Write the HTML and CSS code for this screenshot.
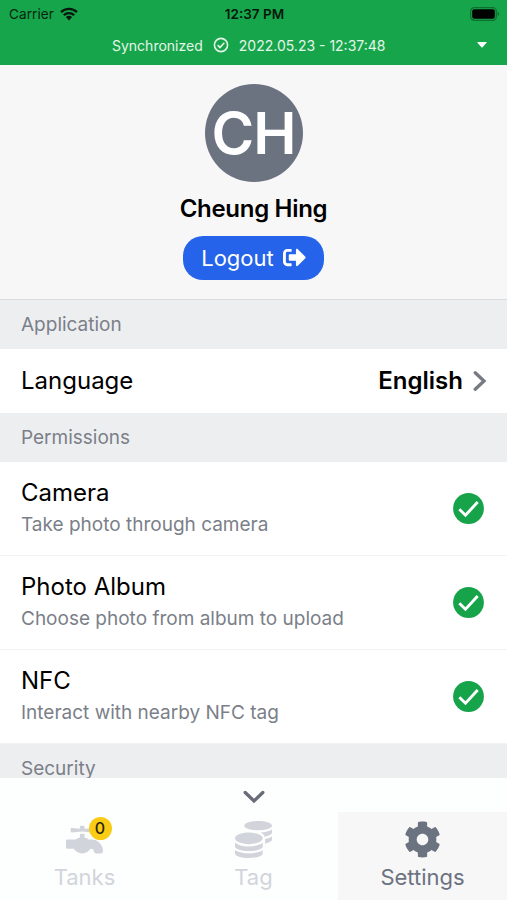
FILE: index.html
```html
<!DOCTYPE html>
<html lang="en">
<head>
<meta charset="utf-8">
<title>Settings</title>
<link rel="stylesheet" href="styles.css">
</head>
<body>
<div class="screen">
  <header class="header">
    <div class="status">
      <div class="carrier"><span>Carrier</span>
        <svg width="18" height="14" viewBox="0 0 18 14"><g fill="none" stroke="#06180c" stroke-width="2.3"><path d="M1 5.1a11.4 11.4 0 0 1 16 0"/><path d="M3.8 8.2a7.4 7.4 0 0 1 10.4 0"/></g><path fill="#06180c" d="M5.9 10.1a4.4 4.4 0 0 1 6.2 0L9 13.4z"/></svg>
      </div>
      <span class="clock">12:37 PM</span>
      <svg class="battery" width="30" height="14" viewBox="0 0 30 14"><rect x=".7" y=".7" width="25.6" height="12.6" rx="3.6" fill="none" stroke="#0d7030" stroke-width="1.3"/><rect x="2.2" y="2.2" width="22.6" height="9.6" rx="2" fill="#000"/><path d="M27.6 5v4q1.7-.7 1.7-2t-1.7-2z" fill="#0d7030"/></svg>
    </div>
    <div class="sync">
      <span class="sync-state">Synchronized</span>
      <svg width="16" height="16" viewBox="0 0 16 16" fill="none" stroke="#e4f5e9" stroke-width="1.6"><circle cx="8" cy="8" r="6.6"/><path d="M4.7 8.1l2.3 2.4 4.3-4.7"/></svg>
      <span class="sync-time">2022.05.23 - 12:37:48</span>
      <svg class="caret" width="10" height="6" viewBox="0 0 10 6"><path d="M.8 0h8.4q.8 0 .3.7L5.6 5.2q-.6.6-1.2 0L.5.7Q0 0 .8 0z" fill="#fff"/></svg>
    </div>
  </header>

  <section class="profile">
    <div class="avatar"><span>CH</span></div>
    <h1 class="name">Cheung Hing</h1>
    <button class="logout"><span>Logout</span>
      <svg width="23" height="23" viewBox="0 0 512 512" fill="#fff"><path d="M497 273L329 441c-15 15-41 4.500-41-17v-96H152c-13.300 0-24-10.700-24-24v-96c0-13.300 10.700-24 24-24h136V88c0-21.400 25.900-32 41-17l168 168c9.300 9.400 9.300 24.600 0 34zM192 436v-40c0-6.600-5.400-12-12-12H96c-17.700 0-32-14.300-32-32V160c0-17.700 14.300-32 32-32h84c6.600 0 12-5.400 12-12V76c0-6.600-5.400-12-12-12H96c-53 0-96 43-96 96v192c0 53 43 96 96 96h84c6.600 0 12-5.400 12-12z"/></svg>
    </button>
  </section>

  <main class="list">
    <h2 class="section">Application</h2>
    <div class="row row-language">
      <span class="title t-language">Language</span>
      <span class="value">English</span>
      <svg width="14" height="22" viewBox="0 0 14 22"><path d="M2.200 2.800L11 11l-8.800 8.200" fill="none" stroke="#777983" stroke-width="3.300" stroke-linecap="round"/></svg>
    </div>
    <h2 class="section section-permissions">Permissions</h2>
    <div class="row">
      <div class="text"><span class="title t-camera">Camera</span><span class="sub s-camera">Take photo through camera</span></div>
      <svg class="check" viewBox="0 0 31 31"><circle cx="15.500" cy="15.500" r="15.400" fill="#16a34a"/><path d="M6.300 16.200l6.200 6L24.700 9.100" fill="none" stroke="#fff" stroke-width="2.900"/></svg>
    </div>
    <div class="row">
      <div class="text"><span class="title t-photo">Photo Album</span><span class="sub s-photo">Choose photo from album to upload</span></div>
      <svg class="check" viewBox="0 0 31 31"><circle cx="15.500" cy="15.500" r="15.400" fill="#16a34a"/><path d="M6.300 16.200l6.200 6L24.700 9.100" fill="none" stroke="#fff" stroke-width="2.900"/></svg>
    </div>
    <div class="row">
      <div class="text"><span class="title t-nfc">NFC</span><span class="sub s-nfc">Interact with nearby NFC tag</span></div>
      <svg class="check" viewBox="0 0 31 31"><circle cx="15.500" cy="15.500" r="15.400" fill="#16a34a"/><path d="M6.300 16.200l6.200 6L24.700 9.100" fill="none" stroke="#fff" stroke-width="2.900"/></svg>
    </div>
    <h2 class="section section-security">Security</h2>
  </main>

  <footer class="footer">
    <div class="more"><svg width="22" height="14" viewBox="0 0 22 14"><path d="M2.200 2.500L11 11l8.800-8.500" fill="none" stroke="#686b78" stroke-width="3.300" stroke-linecap="round"/></svg></div>
    <nav class="tabs">
      <a class="tab">
        <span class="icon"><svg viewBox="0 0 512 512"><path d="M352 256H313.390c-15.710-13.440-35.460-23.070-57.390-28V180.440l-32-3.380-32 3.380V228c-21.930 5-41.680 14.600-57.390 28H16A16 16 0 0 0 0 272v96a16 16 0 0 0 16 16h92.790C129.380 421.730 173 448 224 448s94.620-26.270 115.210-64H352a32 32 0 0 1 32 32 32 32 0 0 0 32 32h64a32 32 0 0 0 32-32A160 160 0 0 0 352 256ZM81.590 159.910l142.410-15 142.410 15c9.420 1 17.590-6.810 17.590-16.800V112.890c0-10-8.170-17.800-17.590-16.810L256 107.740V80a16 16 0 0 0-16-16H208a16 16 0 0 0-16 16v27.740L81.590 96.080C72.170 95.090 64 102.900 64 112.890v30.220c0 9.990 8.170 17.800 17.590 16.800Z"/></svg><b class="badge">0</b></span>
        <span class="label l-tanks">Tanks</span>
      </a>
      <a class="tab">
        <span class="icon"><svg viewBox="0 0 512 512"><path d="M0 405.300V448c0 35.300 86 64 192 64s192-28.700 192-64v-42.700C342.700 434.400 267.200 448 192 448S41.300 434.400 0 405.300zM320 128c106 0 192-28.700 192-64S426 0 320 0 128 28.700 128 64s86 64 192 64zM0 300.400V352c0 35.300 86 64 192 64s192-28.700 192-64v-51.600c-41.300 34-116.900 51.600-192 51.600S41.300 334.400 0 300.400zm416 11c57.300-11.100 96-31.700 96-55.400v-42.700c-23.200 16.400-57.300 27.600-96 34.500v63.600zM192 160C86 160 0 195.800 0 240s86 80 192 80 192-35.800 192-80-86-80-192-80zm219.300 56.300c60-10.800 100.700-32 100.700-56.300v-42.700c-35.500 25.100-96.500 38.600-160.700 41.800 29.500 14.300 51.200 33.500 60 57.200z"/></svg></span>
        <span class="label l-tag">Tag</span>
      </a>
      <a class="tab active">
        <span class="icon"><svg viewBox="0 0 512 512"><path d="M487.400 315.700l-42.600-24.600c4.300-23.200 4.300-47 0-70.200l42.600-24.600c4.900-2.800 7.100-8.600 5.500-14-11.100-35.600-30-67.800-54.700-94.600-3.800-4.100-10-5.100-14.800-2.300L380.800 110c-17.900-15.400-38.500-27.300-60.800-35.100V25.800c0-5.600-3.900-10.500-9.400-11.700-36.700-8.200-74.300-7.800-109.200 0-5.500 1.200-9.400 6.100-9.400 11.700V75c-22.200 7.900-42.800 19.800-60.800 35.100L88.700 85.500c-4.900-2.800-11-1.900-14.800 2.300-24.700 26.700-43.600 58.900-54.700 94.600-1.700 5.400.6 11.200 5.500 14L67.300 221c-4.300 23.200-4.300 47 0 70.200l-42.600 24.600c-4.900 2.800-7.100 8.600-5.500 14 11.100 35.600 30 67.800 54.700 94.600 3.800 4.100 10 5.100 14.800 2.300l42.600-24.600c17.900 15.400 38.500 27.300 60.800 35.100v49.200c0 5.600 3.900 10.500 9.400 11.700 36.700 8.200 74.300 7.800 109.200 0 5.500-1.200 9.400-6.100 9.400-11.700v-49.200c22.200-7.900 42.800-19.800 60.800-35.100l42.600 24.600c4.900 2.800 11 1.900 14.800-2.300 24.700-26.700 43.600-58.900 54.700-94.600 1.500-5.500-.7-11.300-5.600-14.100zM256 336c-44.100 0-80-35.900-80-80s35.900-80 80-80 80 35.900 80 80-35.900 80-80 80z"/></svg></span>
        <span class="label l-settings">Settings</span>
      </a>
    </nav>
  </footer>
</div>
</body>
</html>
```
FILE: styles.css
```css
* { box-sizing: border-box; }
body { margin: 0; font-family: Inter, "Liberation Sans", sans-serif; color: #000; }
svg { display: block; flex: none; }
.screen { width: 507px; height: 900px; display: flex; flex-direction: column; overflow: hidden; background: #fff; }

.header { height: 64.500px; flex: none; background: #17a54b; }
.status { height: 27px; display: grid; grid-template-columns: 1fr auto 1fr; align-items: center; padding: 0 7px 0 9px; }
.carrier { display: flex; align-items: center; gap: 6px; font-size: 13.500px; letter-spacing: .1px; color: #06240f; }
.clock { font-size: 13.500px; font-weight: 600; color: #04170a; }
.battery { justify-self: end; }
.sync { height: 36px; display: flex; align-items: center; padding: 0 20px 0 112px; font-size: 14px; color: #e4f5e9; }
.sync svg { margin-left: 10px; }
.sync-time { margin-left: 10px; }
.sync .caret { margin-left: auto; }

.profile { height: 235.500px; flex: none; display: flex; flex-direction: column; align-items: center; padding-top: 19px; background: #f7f7f7; border-bottom: 1px solid #d9dbdd; }
.avatar { width: 98px; height: 98px; flex: none; border-radius: 50%; background: #6b7280; color: #fff; display: flex; align-items: center; justify-content: center; font-size: 58px; font-weight: 600; letter-spacing: -1px; }
.name { margin: 12px 0 0; font-size: 24px; line-height: 30px; font-weight: 600; letter-spacing: -.3px; }
.logout { margin: 12px 0 0; width: 141px; height: 44px; border: 0; border-radius: 20px; background: #2563eb; color: #fff; display: flex; align-items: center; justify-content: center; gap: 9px; font: 400 22px Inter, sans-serif; }

.list { height: 478px; flex: none; overflow: hidden; }
.section { margin: 0; height: 48.500px; padding-left: 21px; background: #edeef0; color: #7b7f89; font-size: 19px; line-height: 50px; font-weight: 400; }
.row { height: 94px; display: flex; align-items: center; justify-content: space-between; padding: 0 23px 0 21px; border-bottom: 1px solid #f2f2f3; }
.row-language { height: 64.500px; padding-right: 20px; border: 0; }
.title { font-size: 24px; line-height: 32px; }
.value { margin-left: auto; margin-right: 10px; font-size: 24px; font-weight: 600; }
.text { display: flex; flex-direction: column; }
.sub { font-size: 19px; line-height: 31px; color: #7b7f89; }
.check { width: 31px; height: 31px; }

.footer { flex: 1; display: flex; flex-direction: column; background: #fdfefe; }
.more { height: 34px; display: flex; justify-content: center; padding-top: 12px; }
.tabs { flex: 1; display: grid; grid-template-columns: repeat(3, 1fr); }
.tab { display: flex; flex-direction: column; align-items: center; padding-top: 9px; color: #d1d5db; }
.tab.active { background: #f7f7f7; color: #6b7280; }
.icon { position: relative; width: 37px; height: 37px; }
.icon svg { width: 37px; height: 37px; fill: currentColor; }
.badge { position: absolute; left: 22.500px; top: -4px; width: 23px; height: 23px; border-radius: 50%; background: #facc15; color: #2b2408; font-size: 16px; line-height: 23px; font-weight: 500; text-align: center; }
.label { margin-top: 5px; font-size: 22px; line-height: 28px; }
```
